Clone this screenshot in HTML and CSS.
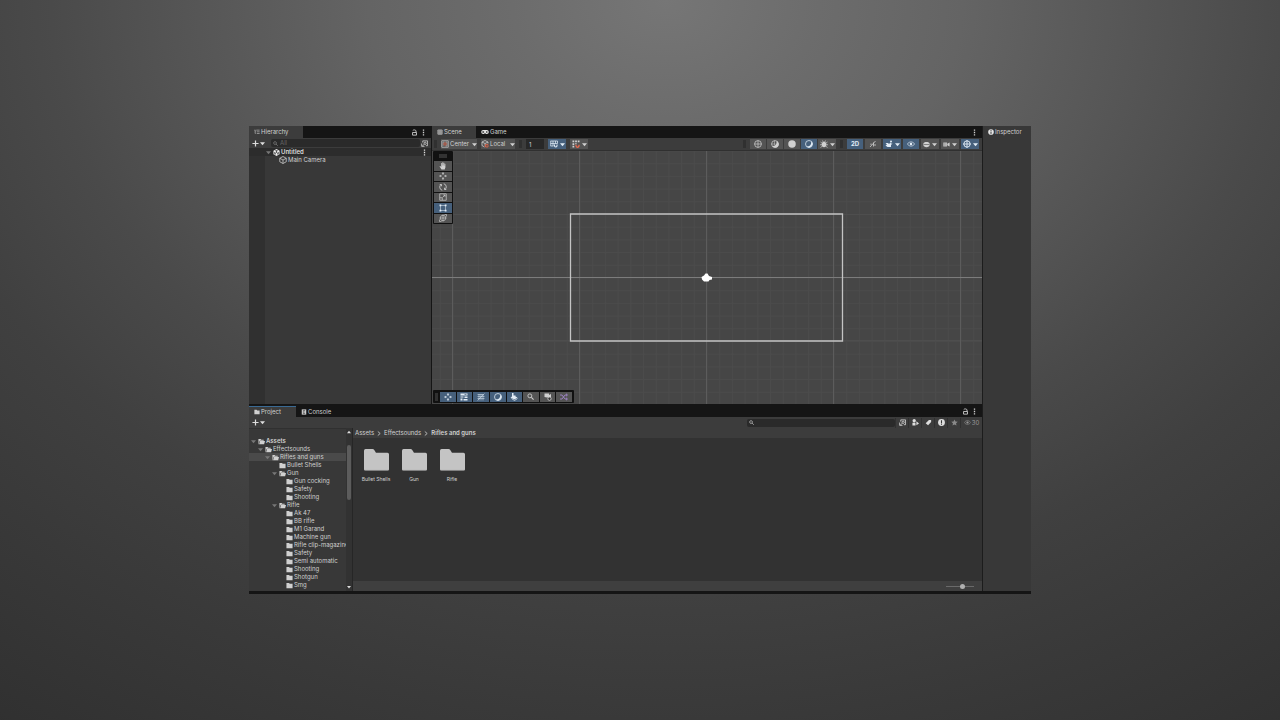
FILE: index.html
```html
<!DOCTYPE html>
<html lang="en">
<head>
<meta charset="utf-8">
<title>Editor</title>
<link rel="stylesheet" href="styles.css">
</head>
<body>
<svg class="sprite" aria-hidden="true">
  <symbol id="list" viewBox="0 0 16 16"><path d="M1 3h3M6 3h9M4 7.500h2M8 7.500h7M4 12h2M8 12h7M3 3v9" fill="none" stroke="currentColor" stroke-width="1.500"/></symbol>
  <symbol id="lock" viewBox="0 0 16 16"><path d="M4 3.500c1.500-2 7-2 7.500 1V8" fill="none" stroke="currentColor" stroke-width="2"/><path d="M3.500 8h9v6h-9z" fill="none" stroke="currentColor" stroke-width="2"/></symbol>
  <symbol id="dots" viewBox="0 0 16 16"><path d="M6.500 1h3v3h-3zM6.500 6.500h3v3h-3zM6.500 12h3v3h-3z" fill="currentColor"/></symbol>
  <symbol id="plus" viewBox="0 0 16 16"><path d="M8 1v14M1 8h14" stroke="currentColor" stroke-width="2.800"/></symbol>
  <symbol id="caret" viewBox="0 0 10 10"><path d="M0 2.500h10L5 8.500z" fill="currentColor"/></symbol>
  <symbol id="caretup" viewBox="0 0 10 10"><path d="M0 8h10L5 2z" fill="currentColor"/></symbol>
  <symbol id="search" viewBox="0 0 16 16"><circle cx="6.500" cy="6.500" r="4.500" fill="none" stroke="currentColor" stroke-width="2"/><path d="M10 10l5 5" stroke="currentColor" stroke-width="2.400"/></symbol>
  <symbol id="popout" viewBox="0 0 16 16"><path d="M4 6V2h11v11h-4" fill="none" stroke="currentColor" stroke-width="1.800"/><circle cx="9.500" cy="7.500" r="2.600" fill="none" stroke="currentColor" stroke-width="1.800"/><path d="M7.500 9.500L3 14M1.500 8v6.500H8" fill="none" stroke="currentColor" stroke-width="1.800"/></symbol>
  <symbol id="unity" viewBox="0 0 16 16"><path d="M8 0l7 4v8l-7 4-7-4V4z" fill="#eee"/><path d="M8 8V2.500M8 8l-5 3M8 8l5 3M5 3.500L8 5l3-1.500M2.500 7l2 2 .5 4M13.500 7l-2 2-.5 4" fill="none" stroke="#2d2d2d" stroke-width="1.500"/></symbol>
  <symbol id="cube" viewBox="0 0 16 16"><path d="M8 1l6.500 3.500v7L8 15l-6.500-3.500v-7zM1.500 4.500L8 8l6.500-3.500M8 8v7" fill="none" stroke="currentColor" stroke-width="1.500"/></symbol>
  <symbol id="scene" viewBox="0 0 16 16"><path d="M3 1h10l2 2v10l-2 2H3l-2-2V3z" fill="#a8a8a8"/><path d="M5 1v14M11 1v14M1 5.500h14M1 10.500h14" stroke="#3c3c3c" stroke-opacity=".4"/></symbol>
  <symbol id="game" viewBox="0 0 20 16"><path d="M5.500 3h9a5 5 0 0 1 0 10c-2 0-2.500-2-4.500-2s-2.500 2-4.500 2a5 5 0 0 1 0-10z" fill="#e4e4e4"/><path d="M5.500 5.500v5M3 8h5" stroke="#151515" stroke-width="1.600"/><circle cx="14.500" cy="8" r="2" fill="#151515"/></symbol>
  <symbol id="info" viewBox="0 0 16 16"><circle cx="8" cy="8" r="7.500" fill="#e4e4e4"/><path d="M8 3v2.500M8 7v6" stroke="#383838" stroke-width="2.600"/></symbol>
  <symbol id="alert" viewBox="0 0 16 16"><circle cx="8" cy="8" r="7.800" fill="currentColor"/><path d="M8 3v6M8 10.500V13" stroke="#383838" stroke-width="2.400"/></symbol>
  <symbol id="pivot" viewBox="0 0 16 16"><path d="M1.500 1.500h13v13h-13z" fill="none" stroke="currentColor" stroke-width="1.400"/><path d="M4 4h3M4 4v8M9 4h3v8H9" fill="none" stroke="currentColor"/><circle cx="8" cy="8" r="2.500" fill="none" stroke="#e2674d" stroke-width="1.600"/></symbol>
  <symbol id="local" viewBox="0 0 16 16"><path d="M8 1L2 4v7l5 3M8 1l6 3v3M2 4l6 3 6-3M8 7v4" fill="none" stroke="currentColor" stroke-width="1.500"/><path d="M9 9h5v5H9zM7 12h4" fill="none" stroke="#e2674d" stroke-width="1.600"/></symbol>
  <symbol id="gridsnap" viewBox="0 0 16 16"><path d="M1 2h14M1 7h14M1 12h6M1.500 2v10M6 2v10M11 2v5M15 2v5" fill="none" stroke="currentColor" stroke-width="1.500"/><path d="M9 9v2.500a2.500 2.500 0 0 0 5 0V9" fill="none" stroke="currentColor" stroke-width="2.200"/></symbol>
  <symbol id="magnet" viewBox="0 0 16 16"><path d="M1 1h3.500v3.500H1zM6.300 1h3.500v3.500H6.300zM11.500 1H15v3.500h-3.500zM1 6.300h3.500v3.500H1zM6.300 6.300h3v2h-3zM1 11.500h3.500V15H1z" fill="currentColor"/><path d="M8 9.500v2a3 3 0 0 0 6 0v-2" fill="none" stroke="#ec6a4e" stroke-width="2.600"/></symbol>
  <symbol id="globe" viewBox="0 0 16 16"><circle cx="8" cy="8" r="6.800" fill="none" stroke="currentColor" stroke-width="1.500"/><path d="M1 8h14M8 1v14" fill="none" stroke="currentColor" stroke-width="1.400"/></symbol>
  <symbol id="shadedwire" viewBox="0 0 16 16"><circle cx="8" cy="8" r="6.800" fill="none" stroke="currentColor" stroke-width="1.500"/><path d="M11 2a7 7 0 1 1-8.500 10c5.500.5 9.500-4 8.500-10z" fill="currentColor"/><path d="M1 8h8M7 1v9" stroke="currentColor" stroke-width="1"/></symbol>
  <symbol id="disc" viewBox="0 0 16 16"><circle cx="8" cy="8" r="7.500" fill="currentColor"/></symbol>
  <symbol id="moon" viewBox="0 0 16 16"><circle cx="8" cy="8" r="7" fill="none" stroke="currentColor" stroke-width="1.500"/><path d="M12.500 2.500A7 7 0 1 1 3 13c6 .5 10.500-4 9.500-10.500z" fill="currentColor"/></symbol>
  <symbol id="bug" viewBox="0 0 16 16"><ellipse cx="8" cy="9" rx="4.500" ry="5.500" fill="currentColor"/><path d="M5 1l1.500 3M11 1L9.500 4M1 4l4 3M15 4l-4 3M0 9.500h16M1 15l4-3M15 15l-4-3" stroke="currentColor" stroke-width="1.400"/></symbol>
  <symbol id="audio" viewBox="0 0 16 16"><path d="M2 14L13 2M9 5v8M4 7v3M12 8v4" fill="none" stroke="currentColor" stroke-width="1.600"/></symbol>
  <symbol id="fx" viewBox="0 0 16 16"><path d="M1 6h5l2 2 3-3 1 2h3l-3 3v4H5L1 11l3-2z" fill="currentColor"/><circle cx="12" cy="3" r="2" fill="currentColor"/></symbol>
  <symbol id="eye" viewBox="0 0 20 16"><path d="M1 8c4-7 14-7 18 0-4 7-14 7-18 0z" fill="none" stroke="currentColor" stroke-width="1.600"/><circle cx="10" cy="8" r="3.200" fill="currentColor"/></symbol>
  <symbol id="layers" viewBox="0 0 16 16"><path d="M8 2c4 0 7 1.500 7 3.500v5C15 12.500 12 14 8 14s-7-1.500-7-3.500v-5C1 3.500 4 2 8 2z" fill="currentColor"/><path d="M2 8h12" stroke="#555" stroke-width="1.500"/></symbol>
  <symbol id="cam" viewBox="0 0 18 16"><path d="M1 3h9v10H1zM11 6l6-3v10l-6-3z" fill="currentColor"/><path d="M4 3v10M7 3v10" stroke="#555" stroke-width=".8"/></symbol>
  <symbol id="gizmo" viewBox="0 0 16 16"><circle cx="8" cy="8" r="6.300" fill="none" stroke="currentColor" stroke-width="1.900"/><path d="M0 8h16M8 0v16" fill="none" stroke="currentColor" stroke-width="1.800"/></symbol>
  <symbol id="hand" viewBox="0 0 16 16"><path d="M5 15L1.500 9.500c-.8-1.500.8-2 1.500-1l1.500 1.500V3c0-1.300 1.700-1.300 1.700 0v4h.5V1.500c0-1.300 1.800-1.300 1.800 0V7H9V2.500c0-1.300 1.700-1.300 1.700 0V7.500h.5V4.500c0-1.200 1.600-1.200 1.600 0V11l-1.500 4z" fill="currentColor"/></symbol>
  <symbol id="move" viewBox="0 0 16 16"><path d="M8 0l2.500 3.500h-5zM8 16l2.500-3.500h-5zM0 8l3.500-2.500v5zM16 8l-3.500-2.500v5z" fill="currentColor"/><path d="M8 3v3M8 10v3M3 8h3M10 8h3" stroke="currentColor" stroke-width="1.400"/></symbol>
  <symbol id="rotate" viewBox="0 0 16 16"><path d="M6.500 14.500A6.500 6.500 0 0 1 4 3M9.500 1.500A6.500 6.500 0 0 1 12 13M1.500 3H5v3.500M14.500 13H11V9.500" fill="none" stroke="currentColor" stroke-width="1.700"/></symbol>
  <symbol id="scale" viewBox="0 0 16 16"><path d="M1.500 1.500h13v13h-13zM1.500 9.500h5v5M7 9l5-5M8.500 4H12v3.500" fill="none" stroke="currentColor" stroke-width="1.400"/></symbol>
  <symbol id="rect" viewBox="0 0 16 16"><path d="M3 3h10v10H3z" fill="none" stroke="currentColor" stroke-width="1.100"/><path d="M1 1h3.500v3.500H1zM11.500 1H15v3.500h-3.500zM1 11.500h3.500V15H1zM11.500 11.500H15V15h-3.500z" fill="currentColor"/></symbol>
  <symbol id="transform" viewBox="0 0 16 16"><circle cx="8" cy="8" r="5.500" fill="none" stroke="currentColor" stroke-width="1.300"/><path d="M8 1v14M1 8h14M11 1h4v4M1 11v4h4" fill="none" stroke="currentColor" stroke-width="1.300"/></symbol>
  <symbol id="sliders" viewBox="0 0 16 16"><path d="M1 1h14v4H1zM1 7h6v2H1zM9 7h6v3H9zM1 11h4v4H1zM7 12h8v3H7z" fill="currentColor"/><path d="M9 3h4" stroke="#46607c" stroke-width="1.500"/></symbol>
  <symbol id="nogrid" viewBox="0 0 16 16"><path d="M1 3h12M1 7h14M1 11h14M4 2v13M8 2v13M12 2v13M1 15L15 1" fill="none" stroke="currentColor" stroke-width="1"/></symbol>
  <symbol id="overlay" viewBox="0 0 16 16"><path d="M4 0h3v5h4v2l4 2-6 4-8-4 3-2z" fill="currentColor"/><path d="M3 11l6 4 6-4" fill="none" stroke="currentColor" stroke-width="1.500"/></symbol>
  <symbol id="camgear" viewBox="0 0 16 16"><path d="M1 1h9v3l4-2v7H6L1 8z" fill="currentColor"/><circle cx="11" cy="11.500" r="3.300" fill="#333" stroke="currentColor" stroke-width="1.600"/></symbol>
  <symbol id="shuffle" viewBox="0 0 16 16"><path d="M0 4h4l6 8h4M0 12h4l6-8h4M12 1.500L15 4l-3 2.500M12 9.500l3 2.500-3 2.500" fill="none" stroke="#a98ad8" stroke-width="1.600"/></symbol>
  <symbol id="folder" viewBox="0 0 16 16"><path d="M1 2h6l1.500 2H15v10H1z" fill="currentColor"/></symbol>
  <symbol id="folderopen" viewBox="0 0 16 16"><path d="M1 2h5l1.500 2H13v2H4L2 11v3H1z" fill="currentColor"/><path d="M4.500 7H16l-2 7H2.500z" fill="currentColor"/></symbol>
  <symbol id="bigfolder" viewBox="0 0 48 42"><path d="M3 0h13.500q2 0 3.200 1.800L23 7h22q3 0 3 3v29q0 2-3 2H3q-3 0-3-2V3q0-3 3-3z" fill="#c4c4c4"/><path d="M1 41h46" stroke="#8a8a8a" stroke-width="1"/></symbol>
  <symbol id="console" viewBox="0 0 16 16"><path d="M2 1h12v14H2z" fill="currentColor"/><path d="M5 4.500h6M5 8h4M5 11.500h6" stroke="#151515" stroke-width="1.600"/></symbol>
  <symbol id="types" viewBox="0 0 16 16"><circle cx="5" cy="4" r="3.800" fill="currentColor"/><path d="M1 8.500h7V15H1zM10 5l6 5-6 4z" fill="currentColor"/></symbol>
  <symbol id="tag" viewBox="0 0 16 16"><path d="M9 2h5v5l-7 7.500-5.500-5z" fill="currentColor"/></symbol>
  <symbol id="star" viewBox="0 0 16 16"><path d="M8 1l2.200 4.800 5.300.6-4 3.500 1.100 5.200L8 12.500l-4.600 2.600 1.100-5.200-4-3.500 5.300-.6z" fill="currentColor"/></symbol>
</svg>

<main class="window">
  <div class="workspace">
    <div class="upper">
      <section class="hierarchy">
        <header class="tabbar">
          <button class="tab active"><svg class="ic"><use href="#list"/></svg>Hierarchy</button>
          <span class="grow"></span>
          <button class="mini" aria-label="Lock"><svg class="ic"><use href="#lock"/></svg></button>
          <button class="mini" aria-label="Menu"><svg class="ic"><use href="#dots"/></svg></button>
        </header>
        <div class="toolbar">
          <button class="add" aria-label="Add"><svg class="ic"><use href="#plus"/></svg><svg class="caret"><use href="#caret"/></svg></button>
          <label class="search filter"><svg class="ic5"><use href="#search"/></svg><input type="text" placeholder="All" aria-label="Search hierarchy"></label>
          <button class="mini" aria-label="Open search"><svg class="ic"><use href="#popout"/></svg></button>
        </div>
        <ul class="objects">
          <li class="row root"><svg class="arrow"><use href="#caret"/></svg><svg class="ic"><use href="#unity"/></svg><b>Untitled</b><span class="grow"></span><svg class="ic"><use href="#dots"/></svg></li>
          <li class="row child"><svg class="ic8"><use href="#cube"/></svg>Main Camera</li>
        </ul>
      </section>

      <section class="scene">
        <header class="tabbar">
          <button class="tab active scenetab"><svg class="ic"><use href="#scene"/></svg>Scene</button>
          <button class="tab"><svg class="ic8"><use href="#game"/></svg>Game</button>
          <span class="grow"></span>
          <button class="mini" aria-label="Menu"><svg class="ic"><use href="#dots"/></svg></button>
        </header>
        <div class="tools">
          <i class="grip"></i>
          <label class="pick"><svg class="ic8"><use href="#pivot"/></svg><select aria-label="Handle position"><option>Center</option></select><svg class="caret"><use href="#caret"/></svg></label>
          <label class="pick"><svg class="ic8"><use href="#local"/></svg><select class="short" aria-label="Handle rotation"><option>Local</option></select><svg class="caret"><use href="#caret"/></svg></label>
          <i class="grip"></i>
          <input class="size" type="text" value="1" aria-label="Grid size">
          <button class="tb on drop" aria-label="Grid snapping"><svg class="ic8"><use href="#gridsnap"/></svg><svg class="caret"><use href="#caret"/></svg></button>
          <button class="tb drop" aria-label="Snap increment"><svg class="ic8"><use href="#magnet"/></svg><svg class="caret"><use href="#caret"/></svg></button>
          <span class="grow"></span>
          <i class="grip"></i>
          <div class="modes">
            <button class="tb" aria-label="Wireframe"><svg class="ic8"><use href="#globe"/></svg></button>
            <button class="tb" aria-label="Shaded wireframe"><svg class="ic8"><use href="#shadedwire"/></svg></button>
            <button class="tb" aria-label="Unlit"><svg class="ic8"><use href="#disc"/></svg></button>
            <button class="tb on" aria-label="Shaded"><svg class="ic8"><use href="#moon"/></svg></button>
            <button class="tb drop" aria-label="Debug draw"><svg class="ic8"><use href="#bug"/></svg><svg class="caret"><use href="#caret"/></svg></button>
          </div>
          <i class="grip"></i>
          <div class="views">
            <button class="tb on"><b>2D</b></button>
            <button class="tb" aria-label="Audio"><svg class="ic8"><use href="#audio"/></svg></button>
            <button class="tb on drop" aria-label="Effects"><svg class="ic8"><use href="#fx"/></svg><svg class="caret"><use href="#caret"/></svg></button>
            <button class="tb on" aria-label="Visibility"><svg class="ic8"><use href="#eye"/></svg></button>
            <button class="tb drop" aria-label="Layers"><svg class="ic"><use href="#layers"/></svg><svg class="caret"><use href="#caret"/></svg></button>
            <button class="tb drop" aria-label="Camera"><svg class="ic"><use href="#cam"/></svg><svg class="caret"><use href="#caret"/></svg></button>
            <button class="tb on drop" aria-label="Gizmos"><svg class="ic8"><use href="#gizmo"/></svg><svg class="caret"><use href="#caret"/></svg></button>
          </div>
        </div>
        <div class="viewport">
          <svg class="canvas" viewBox="0 0 550 253" preserveAspectRatio="xMidYMid slice" role="img" aria-label="Scene view">
            <defs>
              <pattern id="minor" width="12.700" height="12.700" x="274.500" y="126.500" patternUnits="userSpaceOnUse"><path d="M.5 0v12.700M0 .5h12.700" stroke="#4b4b4b" stroke-width="1"/></pattern>
            </defs>
            <path fill="#464646" d="M0 0h550v253H0z"/>
            <path fill="url(#minor)" d="M0 0h550v253H0z"/>
            <path d="M0 63.500h550M0 189.500h550" stroke="#4e4e4e"/>
            <path d="M20.500 0v253M147.500 0v253M274.500 0v253M401.500 0v253M528.500 0v253" stroke="#5c5c5c"/>
            <path d="M0 126.500h550" stroke="#7c7c7c"/>
            <path d="M138.500 63h272v127h-272z" fill="none" stroke="#c4c4c4" stroke-width="1.300"/>
            <path d="M269.500 126l2.500-1.500 1.500-2h2l1.500 2.500 3 1v2.500l-2.500.5-1 1.500h-4.500l-2-2z" fill="#fff"/>
          </svg>
          <div class="palette" role="toolbar" aria-label="Tools">
            <i class="bar"></i>
            <div class="stack">
              <button class="tb" aria-label="Hand"><svg class="ic8"><use href="#hand"/></svg></button>
              <button class="tb" aria-label="Move"><svg class="ic8"><use href="#move"/></svg></button>
              <button class="tb" aria-label="Rotate"><svg class="ic8"><use href="#rotate"/></svg></button>
              <button class="tb" aria-label="Scale"><svg class="ic8"><use href="#scale"/></svg></button>
              <button class="tb on" aria-label="Rect"><svg class="ic8"><use href="#rect"/></svg></button>
              <button class="tb" aria-label="Transform"><svg class="ic8"><use href="#transform"/></svg></button>
            </div>
          </div>
          <div class="dock" role="toolbar" aria-label="Overlays">
            <i class="grip"></i>
            <div class="line">
              <button class="tb on" aria-label="Tools"><svg class="ic8"><use href="#move"/></svg></button>
              <button class="tb on" aria-label="Tool settings"><svg class="ic8"><use href="#sliders"/></svg></button>
              <button class="tb on" aria-label="Grid"><svg class="ic8"><use href="#nogrid"/></svg></button>
              <button class="tb on" aria-label="Draw modes"><svg class="ic8"><use href="#moon"/></svg></button>
              <button class="tb on" aria-label="View options"><svg class="ic8"><use href="#overlay"/></svg></button>
              <button class="tb" aria-label="Search"><svg class="ic"><use href="#search"/></svg></button>
              <button class="tb" aria-label="Cameras"><svg class="ic8"><use href="#camgear"/></svg></button>
              <button class="tb" aria-label="Shuffle"><svg class="ic8"><use href="#shuffle"/></svg></button>
            </div>
          </div>
        </div>
      </section>
    </div>

    <section class="project">
      <header class="tabbar">
        <button class="tab active focus"><svg class="ic"><use href="#folder"/></svg>Project</button>
        <button class="tab"><svg class="ic"><use href="#console"/></svg>Console</button>
        <span class="grow"></span>
        <button class="mini" aria-label="Lock"><svg class="ic"><use href="#lock"/></svg></button>
        <button class="mini" aria-label="Menu"><svg class="ic"><use href="#dots"/></svg></button>
      </header>
      <div class="toolbar assetbar">
        <button class="add" aria-label="Create"><svg class="ic"><use href="#plus"/></svg><svg class="caret"><use href="#caret"/></svg></button>
        <span class="grow"></span>
        <label class="search assets"><svg class="ic5"><use href="#search"/></svg><input type="text" aria-label="Search assets"></label>
        <button class="cell" aria-label="Open search"><svg class="ic"><use href="#popout"/></svg></button>
        <button class="cell" aria-label="Search by type"><svg class="ic"><use href="#types"/></svg></button>
        <button class="cell" aria-label="Search by label"><svg class="ic"><use href="#tag"/></svg></button>
        <button class="cell" aria-label="Search by log"><svg class="ic"><use href="#alert"/></svg></button>
        <button class="cell dim" aria-label="Favourite"><svg class="ic"><use href="#star"/></svg></button>
        <button class="cell count"><svg class="ic"><use href="#eye"/></svg>30</button>
      </div>
      <div class="browser">
        <ul class="tree">
          <li class="row l0"><svg class="arrow"><use href="#caret"/></svg><svg class="ic"><use href="#folderopen"/></svg><b>Assets</b></li>
          <li class="row l1"><svg class="arrow"><use href="#caret"/></svg><svg class="ic"><use href="#folderopen"/></svg>Effectsounds</li>
          <li class="row l2 selected"><svg class="arrow"><use href="#caret"/></svg><svg class="ic"><use href="#folderopen"/></svg>Rifles and guns</li>
          <li class="row l3"><i class="arrow"></i><svg class="ic"><use href="#folder"/></svg>Bullet Shells</li>
          <li class="row l3"><svg class="arrow"><use href="#caret"/></svg><svg class="ic"><use href="#folderopen"/></svg>Gun</li>
          <li class="row l4"><i class="arrow"></i><svg class="ic"><use href="#folder"/></svg>Gun cocking</li>
          <li class="row l4"><i class="arrow"></i><svg class="ic"><use href="#folder"/></svg>Safety</li>
          <li class="row l4"><i class="arrow"></i><svg class="ic"><use href="#folder"/></svg>Shooting</li>
          <li class="row l3"><svg class="arrow"><use href="#caret"/></svg><svg class="ic"><use href="#folderopen"/></svg>Rifle</li>
          <li class="row l4"><i class="arrow"></i><svg class="ic"><use href="#folder"/></svg>Ak 47</li>
          <li class="row l4"><i class="arrow"></i><svg class="ic"><use href="#folder"/></svg>BB rifle</li>
          <li class="row l4"><i class="arrow"></i><svg class="ic"><use href="#folder"/></svg>M1 Garand</li>
          <li class="row l4"><i class="arrow"></i><svg class="ic"><use href="#folder"/></svg>Machine gun</li>
          <li class="row l4"><i class="arrow"></i><svg class="ic"><use href="#folder"/></svg>Rifle clip-magazine</li>
          <li class="row l4"><i class="arrow"></i><svg class="ic"><use href="#folder"/></svg>Safety</li>
          <li class="row l4"><i class="arrow"></i><svg class="ic"><use href="#folder"/></svg>Semi automatic</li>
          <li class="row l4"><i class="arrow"></i><svg class="ic"><use href="#folder"/></svg>Shooting</li>
          <li class="row l4"><i class="arrow"></i><svg class="ic"><use href="#folder"/></svg>Shotgun</li>
          <li class="row l4"><i class="arrow"></i><svg class="ic"><use href="#folder"/></svg>Smg</li>
        </ul>
        <div class="scroll"><svg class="nib"><use href="#caretup"/></svg><div class="track"><i class="thumb"></i></div><svg class="nib"><use href="#caret"/></svg></div>
        <div class="contents">
          <nav class="crumbs"><a href="#">Assets</a><svg class="sep" viewBox="0 0 10 16"><path d="M2 3l6 5-6 5" fill="none" stroke="currentColor" stroke-width="2"/></svg><a href="#">Effectsounds</a><svg class="sep" viewBox="0 0 10 16"><path d="M2 3l6 5-6 5" fill="none" stroke="currentColor" stroke-width="2"/></svg><b>Rifles and guns</b></nav>
          <div class="folders">
            <button class="folder"><svg class="big"><use href="#bigfolder"/></svg>Bullet Shells</button>
            <button class="folder"><svg class="big"><use href="#bigfolder"/></svg>Gun</button>
            <button class="folder"><svg class="big"><use href="#bigfolder"/></svg>Rifle</button>
          </div>
          <footer class="status"><input class="zoom" type="range" min="0" max="100" value="60" aria-label="Icon size"></footer>
        </div>
      </div>
    </section>
  </div>

  <aside class="inspector">
    <button class="tab"><svg class="ic"><use href="#info"/></svg>Inspector</button>
  </aside>
</main>
</body>
</html>
```

FILE: styles.css
```css
* { box-sizing: border-box; }

body {
  margin: 0;
  min-height: 100vh;
  padding: 126px 249px;
  display: flex;
  background: radial-gradient(ellipse 80% 110% at 52% 0%, #767676 0%, #6c6c6c 15%, #646464 29%, #4a4a4a 60%, #404040 75%, #393939 91%, #2e2e2e 118%);
  font-family: Inter, sans-serif;
  font-size: 6px;
  line-height: 8px;
  color: #d0d0d0;
}

.sprite { position: absolute; width: 0; height: 0; }

button, input, select {
  font: inherit;
  color: inherit;
  border: 0;
  margin: 0;
  padding: 0;
  background: none;
  outline: none;
  appearance: none;
}

button { display: flex; align-items: center; justify-content: center; white-space: nowrap; }
ul { list-style: none; margin: 0; padding: 0; }
svg { flex: none; }
.ic { width: 7px; height: 7px; }
.ic8 { width: 8px; height: 8px; }
.ic5 { width: 5px; height: 5px; }
.caret { width: 5px; height: 5px; }
.nib { width: 4px; height: 4px; }
.grow { flex: 1; }

.window {
  flex: 1;
  min-width: 0;
  display: grid;
  grid-template-columns: 1fr 49px;
  background: #383838;
  border-bottom: 3px solid #151515;
}
.workspace { display: grid; grid-template-rows: 280fr 185fr; min-width: 0; min-height: 0; }
.upper { display: grid; grid-template-columns: 182px 1fr; border-bottom: 2px solid #151515; min-height: 0; }
.hierarchy, .scene, .project { display: flex; flex-direction: column; min-width: 0; min-height: 0; }

.tabbar { display: flex; height: 12px; flex: none; background: #151515; padding-right: 3px; }
.tab { gap: 1px; padding: 0 5px; justify-content: flex-start; }
.tab.active { background: #3c3c3c; }
.tab .ic { width: 6px; height: 6px; }
.hierarchy .tab.active { width: 54px; }
.tab.scenetab { width: 44px; }
.tab.focus { width: 47px; border-top: 1px solid #3a6a94; }
.project .tabbar { height: 11px; }
.mini { width: 9px; }

.toolbar { display: flex; align-items: center; height: 10px; flex: none; background: #3c3c3c; padding: 0 2px 0 3px; }
.add { gap: 1px; width: 13px; color: #ddd; }
.search { display: flex; align-items: center; gap: 2px; height: 8px; padding: 0 2px; border-radius: 2px; background: #2a2a2a; color: #888; }
.search input { flex: 1; min-width: 0; height: 8px; }
.search input::placeholder { color: #666; opacity: 1; }
.filter { flex: 1; margin-left: 6px; }
.assets { color: #ccc; }

.objects { flex: 1; background: linear-gradient(to right, #303030 16px, #383838 16px); }
.row { display: flex; align-items: center; gap: 1px; height: 8px; white-space: nowrap; }
.row b, .crumbs b { font-weight: 600; }
.arrow { width: 5px; height: 5px; color: #777; margin-right: 1px; flex: none; }
.root { background: #2c2c2c; padding: 0 3px 0 17px; color: #ddd; }
.child { padding-left: 30px; }

.scene { border-left: 1px solid #151515; }
.tools { display: flex; align-items: center; gap: 4px; height: 13px; flex: none; padding: 0 3px 0 2px; background: #3c3c3c; border-bottom: 1px solid #303030; }
.grip { width: 3px; height: 8px; background: #303030; flex: none; }
.pick { display: flex; align-items: center; gap: 1px; height: 10px; padding: 0; background: #515151; }
.pick select { width: 21px; }
.pick select.short { width: 19px; }
.size { width: 18px; height: 10px; padding: 0 3px; background: #282828; }
.tb { height: 10px; width: 16px; background: #545454; color: #d0d0d0; }
.tb.on { background: #46607c; color: #e2ecf6; }
.tb.drop { width: 18px; gap: 2px; }
.modes { display: flex; gap: 1px; }
.views { display: flex; gap: 2px; }

.viewport { position: relative; flex: 1; min-height: 0; overflow: hidden; background: #464646; }
.canvas { display: block; width: 100%; height: 100%; }
.palette { position: absolute; left: 1px; top: 0; width: 20px; padding: 0 1px 1px; background: #111; border-radius: 1px; }
.bar { display: block; height: 10px; border: solid #111; border-width: 3px 5px; background: #333; }
.stack { display: grid; grid-template-rows: repeat(6, 1fr); gap: 1px; height: 62px; }
.stack .tb { width: auto; height: auto; }
.dock { position: absolute; left: 1px; bottom: 1px; display: flex; align-items: center; gap: 2px; height: 13px; padding: 1px 2px; background: #111; border-radius: 1px; }
.line { display: grid; grid-template-columns: repeat(8, 1fr); gap: 1px; width: 132px; }
.line .tb { width: auto; }

.assetbar { height: 11px; padding-right: 0; }
.assets { width: 148px; }
.cell { width: 13px; height: 10px; border-left: 1px solid #303030; color: #ddd; }
.cell.dim { color: #8a8a8a; }
.cell.count { width: 22px; gap: 1px; color: #9a9a9a; }

.browser { flex: 1; display: grid; grid-template-columns: 97px 7px 1fr; min-height: 0; }
.tree { min-width: 0; overflow: hidden; padding-top: 8px; border-top: 1px solid #303030; }
.l0 { padding-left: 2px; }
.l1 { padding-left: 9px; }
.l2 { padding-left: 16px; }
.l3 { padding-left: 23px; }
.l4 { padding-left: 30px; }
.selected { background: #4a4a4a; }
.scroll { display: flex; flex-direction: column; align-items: center; padding: 2px 1px; background: #323232; border-right: 1px solid #262626; color: #ddd; }
.track { flex: 1; width: 100%; padding-top: 11px; }
.thumb { display: block; height: 39%; border-radius: 2px; background: #5c5c5c; }

.contents { display: flex; flex-direction: column; min-width: 0; background: #323232; }
.crumbs { display: flex; align-items: center; gap: 3px; height: 10px; padding: 0 2px; background: #3c3c3c; }
.crumbs a { color: inherit; text-decoration: none; }
.sep { width: 4px; height: 7px; }
.folders { flex: 1; display: flex; align-items: flex-start; padding: 11px 4px; }
.folder { flex-direction: column; width: 38px; gap: 4px; font-size: 5px; }
.big { width: 25px; height: 22px; }
.status { display: flex; align-items: center; justify-content: flex-end; height: 10px; padding-right: 8px; background: #3f3f3f; }
.zoom { width: 28px; height: 6px; }
.zoom::-webkit-slider-runnable-track { height: 1px; background: #6a6a6a; }
.zoom::-webkit-slider-thumb { appearance: none; width: 5px; height: 5px; margin-top: -2px; border-radius: 50%; background: #b0b0b0; }

.inspector { border-left: 1px solid #1c1c1c; }
.inspector .tab { height: 12px; }
```
